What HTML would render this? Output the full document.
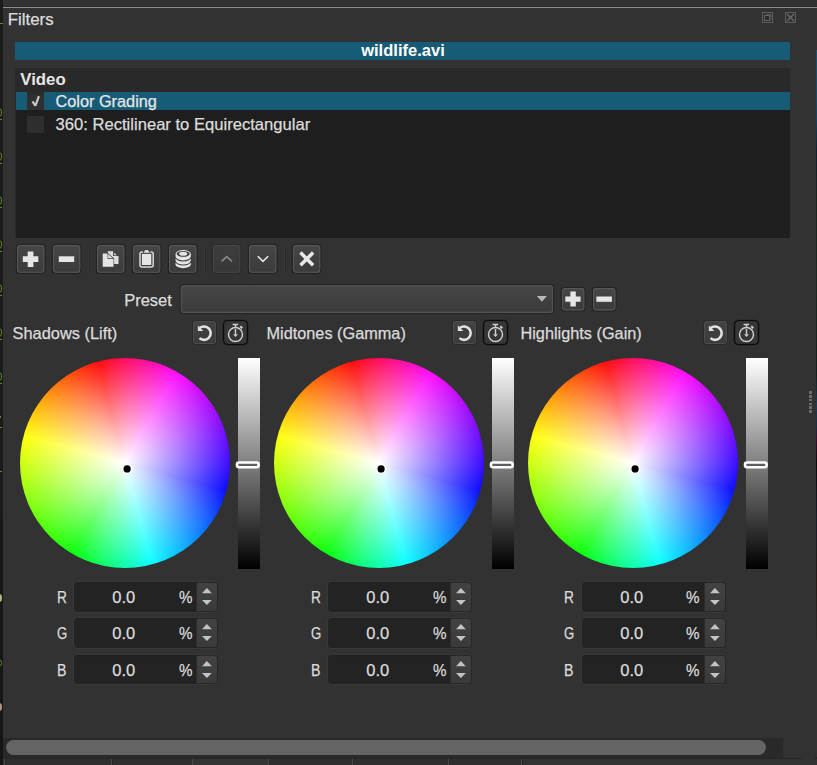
<!DOCTYPE html>
<html>
<head>
<meta charset="utf-8">
<title>Filters</title>
<style>
html,body{margin:0;padding:0;}
body{width:817px;height:765px;overflow:hidden;background:#323232;position:relative;
  font-family:"Liberation Sans",sans-serif;font-size:16.5px;color:#dcdcdc;}
.a{position:absolute;}
.t{position:absolute;white-space:pre;line-height:20px;height:20px;-webkit-text-stroke:0.25px currentColor;}
.btn{position:absolute;}
.btn svg{position:absolute;left:0;top:0;overflow:visible;}
.sep{position:absolute;width:1px;background:#282828;box-shadow:-1px 0 0 #393939;}
.sbtn{position:absolute;box-sizing:border-box;border:1px solid #282828;border-radius:3.5px;
  background:linear-gradient(#434343,#3a3a3a);box-shadow:inset 0 0 0 1px #4d4d4d;}
.kbtn{position:absolute;box-sizing:border-box;border:1px solid #0b0b0b;border-radius:4.5px;background:#363636;box-shadow:0 0 0 .35px rgba(8,8,8,.55),inset 0 0 0 .35px rgba(8,8,8,.5);}
.wheel{position:absolute;width:210px;height:210px;border-radius:50%;
  background:radial-gradient(circle closest-side,#fff 0,rgba(255,255,255,0) 105%),
  conic-gradient(from -15deg,#f00 0deg,#f0f 45deg,#00f 120deg,#0ff 180deg,#0f0 225deg,#ff0 300deg,#f00 360deg);}
.dot{position:absolute;width:7px;height:7px;border-radius:50%;background:#000;box-shadow:0 0 0 1.6px #fff;}
.vs{position:absolute;width:22px;height:211px;background:linear-gradient(#fff,#000);}
.vh{position:absolute;width:24px;height:8px;box-sizing:border-box;border:2.6px solid #fff;border-radius:3.5px;background:rgba(0,0,0,.28);}
.spin{position:absolute;width:145.4px;height:31.5px;box-sizing:border-box;border:1px solid #383838;border-radius:4px;background:linear-gradient(#202020 0,#232323 2px);}
.spin .sb{position:absolute;right:-0.6px;top:0;bottom:0;width:21.6px;box-sizing:border-box;border:1px solid #272727;border-left-color:#2b2b2b;border-radius:0 3.5px 3.5px 0;background:linear-gradient(#424242,#3a3a3a);}
.spin svg{position:absolute;right:0;top:0;}
</style>
</head>
<body>
<svg width="0" height="0" style="position:absolute"><defs>
<linearGradient id="bg1" x1="0" y1="0" x2="0" y2="1"><stop offset="0" stop-color="#474747"/><stop offset="1" stop-color="#3a3a3a"/></linearGradient>
<linearGradient id="bg2" x1="0" y1="0" x2="0" y2="1"><stop offset="0" stop-color="#3d3d3d"/><stop offset="1" stop-color="#383838"/></linearGradient>
</defs></svg>
<!-- left strip of neighbouring panel -->
<div class="a" style="left:0;top:0;width:3px;height:765px;background:linear-gradient(#1b1b1b 0,#1b1b1b 519px,#161616 519px)"></div>
<!-- top lines -->
<div class="a" style="left:3px;top:6px;width:814px;height:1px;background:#282828"></div>
<div class="a" style="left:3px;top:7px;width:814px;height:1px;background:#8e8e8e"></div>

<div class="t" style="left:7.7px;top:10px;font-size:16.9px">Filters</div>

<!-- title bar buttons -->
<svg class="a" style="left:760px;top:10px" width="40" height="16" viewBox="0 0 40 16">
  <rect x="2.5" y="2.5" width="10" height="10" fill="none" stroke="#5d5d5a" stroke-width="1"/>
  <path d="M6 4.6h4.9v4.9" fill="none" stroke="#5d5d5a" stroke-width="1"/>
  <rect x="4.6" y="5.5" width="5" height="5" fill="#2b2b2b" stroke="#646461" stroke-width="1"/>
  <rect x="25.5" y="2.5" width="10" height="10" fill="none" stroke="#5d5d5a" stroke-width="1"/>
  <path d="M27 4l7 7M34 4l-7 7" fill="none" stroke="#6c6c68" stroke-width="1.3"/>
</svg>

<!-- clip name bar -->
<div class="a" style="left:15px;top:42px;width:775px;height:18px;background:#175c76"></div>
<div class="t" style="left:15px;top:39.6px;width:776px;text-align:center;font-weight:700;color:#fff;font-size:16.5px;letter-spacing:0.02px;-webkit-text-stroke:0">wildlife.avi</div>

<!-- filter list -->
<div class="a" style="left:15px;top:68px;width:775px;height:170px;background:#1e1e1e"></div>
<div class="a" style="left:15px;top:68px;width:775px;height:24px;background:#292929"></div>
<div class="a" style="left:15px;top:68px;width:1px;height:170px;background:#2a2a2a"></div>
<div class="t" style="left:20.3px;top:70px;font-weight:700;color:#e6e6e6;font-size:16.8px;-webkit-text-stroke:0">Video</div>
<div class="a" style="left:16px;top:92px;width:774px;height:18px;background:#175c76"></div>
<div class="a" style="left:27px;top:92px;width:17px;height:18px;background:linear-gradient(#2b2b2b 0,#2b2b2b 3px,#303030 3px)"></div>
<svg class="a" style="left:27px;top:92px" width="17" height="18" viewBox="0 0 17 18"><path d="M5.4 9.4 L8.4 13.7 L11.9 4.2" fill="none" stroke="#c8c8c8" stroke-width="2.2" stroke-linejoin="bevel"/></svg>
<div class="t" style="left:55.5px;top:90.6px;color:#e6e6e6;font-size:16.3px">Color Grading</div>
<div class="a" style="left:27px;top:116px;width:17px;height:17px;background:#2e2e2e"></div>
<div class="t" style="left:55.6px;top:114.5px;font-size:16.6px">360: Rectilinear to Equirectangular</div>

<!-- toolbar -->
<div class="btn" style="left:16px;top:244px;width:29px;height:30px"><svg width="30" height="31"><rect x="0.45" y="0.5" width="28.40" height="28.80" rx="3.4" fill="url(#bg1)" stroke="#222" stroke-width="1.15"/><rect x="1.5" y="1.55" width="26.30" height="26.70" rx="2.6" fill="none" stroke="#585858" stroke-width="1.05"/><path d="M11.7 7.4h5.7v4.9h4.9v5.7h-4.9v4.9h-5.7v-4.9h-4.9v-5.7h4.9z" fill="#e6e6e6"/></svg></div>
<div class="btn" style="left:52px;top:244px;width:29px;height:30px"><svg width="30" height="31"><rect x="0.45" y="0.5" width="28.40" height="28.80" rx="3.4" fill="url(#bg1)" stroke="#222" stroke-width="1.15"/><rect x="1.5" y="1.55" width="26.30" height="26.70" rx="2.6" fill="none" stroke="#585858" stroke-width="1.05"/><rect x="6.8" y="12.3" width="15.4" height="5.7" fill="#e6e6e6"/></svg></div>
<div class="sep" style="left:89px;top:246.5px;height:25px"></div>
<div class="btn" style="left:96px;top:244px;width:29px;height:30px"><svg width="30" height="31"><rect x="0.45" y="0.5" width="28.40" height="28.80" rx="3.4" fill="url(#bg1)" stroke="#222" stroke-width="1.15"/><rect x="1.5" y="1.55" width="26.30" height="26.70" rx="2.6" fill="none" stroke="#585858" stroke-width="1.05"/>
  <path d="M11.8 7.3h5.3v4.7h5.4v8h-10.7z" fill="#dcdcdc"/>
  <path d="M18.1 8.7l2.9 2.5h-2.9z" fill="#d6d6d6"/>
  <path d="M6.7 9.6h4.9v5.1h5.9v8h-10.8z" fill="#e4e4e4" stroke="#414141" stroke-width="1.2" paint-order="stroke"/>
  <path d="M11.6 9.2l6.3 5.5" stroke="#414141" stroke-width="0.9" fill="none"/>
  <path d="M12.6 11.2l3.1 2.7h-3.1z" fill="#dedede"/>
</svg></div>
<div class="btn" style="left:132px;top:244px;width:29px;height:30px"><svg width="30" height="31"><rect x="0.45" y="0.5" width="28.40" height="28.80" rx="3.4" fill="url(#bg1)" stroke="#222" stroke-width="1.15"/><rect x="1.5" y="1.55" width="26.30" height="26.70" rx="2.6" fill="none" stroke="#585858" stroke-width="1.05"/>
  <path d="M10.9 8h-0.9a2 2 0 0 0-2 2v11.1a2 2 0 0 0 2 2h9.2a2 2 0 0 0 2-2v-11.1a2 2 0 0 0-2-2h-0.9" fill="none" stroke="#d8d8d8" stroke-width="1.5"/>
  <rect x="9.9" y="9.9" width="9.4" height="11.1" fill="#e4e4e4"/>
  <path d="M11.5 8.8l1.9-2.9h2.4l1.9 2.9z" fill="#e0e0e0"/>
</svg></div>
<div class="btn" style="left:168px;top:244px;width:29px;height:30px"><svg width="30" height="31"><rect x="0.45" y="0.5" width="28.40" height="28.80" rx="3.4" fill="url(#bg1)" stroke="#222" stroke-width="1.15"/><rect x="1.5" y="1.55" width="26.30" height="26.70" rx="2.6" fill="none" stroke="#585858" stroke-width="1.05"/>
  <ellipse cx="15.2" cy="20.4" rx="7.6" ry="3.8" fill="#e4e4e4"/>
  <rect x="7.6" y="10" width="15.2" height="10.4" fill="#e4e4e4"/>
  <ellipse cx="15.2" cy="10" rx="7.6" ry="3.9" fill="#e4e4e4"/>
  <path d="M7.4 13a7.8 3.9 0 0 0 15.6 0" fill="none" stroke="#3e3e3e" stroke-width="1.05"/>
  <path d="M7.4 17.1a7.8 3.9 0 0 0 15.6 0" fill="none" stroke="#3e3e3e" stroke-width="1.05"/>
  <ellipse cx="15.2" cy="9.85" rx="6.5" ry="2.95" fill="#3e3e3e"/>
  <ellipse cx="15.2" cy="9.8" rx="4.1" ry="2" fill="#e4e4e4"/>
</svg></div>
<div class="sep" style="left:205px;top:246.5px;height:25px"></div>
<div class="btn" style="left:212px;top:244px;width:29px;height:30px"><svg width="30" height="31"><rect x="0.45" y="0.5" width="28.40" height="28.80" rx="3.4" fill="url(#bg2)" stroke="#2a2a2a" stroke-width="1.15"/><rect x="1.5" y="1.55" width="26.30" height="26.70" rx="2.6" fill="none" stroke="#474747" stroke-width="1.05"/><path d="M9.6 17.4l5.1-4.7 5.3 4.7" fill="none" stroke="#8a8a8a" stroke-width="1.6"/></svg></div>
<div class="btn" style="left:248px;top:244px;width:29px;height:30px"><svg width="30" height="31"><rect x="0.45" y="0.5" width="28.40" height="28.80" rx="3.4" fill="url(#bg1)" stroke="#222" stroke-width="1.15"/><rect x="1.5" y="1.55" width="26.30" height="26.70" rx="2.6" fill="none" stroke="#585858" stroke-width="1.05"/><path d="M9.8 12.2l5.1 5.2 5.3-5.2" fill="none" stroke="#e8e8e8" stroke-width="1.6"/></svg></div>
<div class="sep" style="left:285px;top:246.5px;height:25px"></div>
<div class="btn" style="left:292px;top:244px;width:29px;height:30px"><svg width="30" height="31"><rect x="0.45" y="0.5" width="28.40" height="28.80" rx="3.4" fill="url(#bg1)" stroke="#222" stroke-width="1.15"/><rect x="1.5" y="1.55" width="26.30" height="26.70" rx="2.6" fill="none" stroke="#585858" stroke-width="1.05"/><path d="M8.5 8.6l12.6 12.7M21.1 8.6l-12.6 12.7" fill="none" stroke="#e8e8e8" stroke-width="3.5"/></svg></div>

<!-- preset row -->
<div class="t" style="left:124.2px;top:290px">Preset</div>
<svg class="a" style="left:179px;top:283px" width="377" height="33"><rect x="1.2" y="1.65" width="373.4" height="28.8" rx="3.6" fill="url(#bg1)" stroke="#232323" stroke-width="1.15"/><rect x="2.25" y="2.65" width="371.25" height="26.7" rx="2.7" fill="none" stroke="#555" stroke-width="1.05"/></svg>
<svg class="a" style="left:536px;top:295px" width="12" height="8"><path d="M0.9 1.1h10l-5 5.7z" fill="#b8b8b8"/></svg>
<div class="btn" style="left:561px;top:287px;width:24px;height:24px"><svg width="25" height="25"><rect x="0.45" y="0.5" width="23.50" height="23.40" rx="3.4" fill="url(#bg1)" stroke="#222" stroke-width="1.15"/><rect x="1.5" y="1.55" width="21.40" height="21.30" rx="2.6" fill="none" stroke="#585858" stroke-width="1.05"/><path d="M9.4 4.5h5.4v5h4.8v5.3h-4.8v4.8h-5.4v-4.8h-5.1v-5.3h5.1z" fill="#e6e6e6"/></svg></div>
<div class="btn" style="left:592.3px;top:287px;width:24px;height:24px"><svg width="25" height="25"><rect x="0.45" y="0.5" width="23.50" height="23.40" rx="3.4" fill="url(#bg1)" stroke="#222" stroke-width="1.15"/><rect x="1.5" y="1.55" width="21.40" height="21.30" rx="2.6" fill="none" stroke="#585858" stroke-width="1.05"/><rect x="4.4" y="9.5" width="15.5" height="5.3" fill="#e6e6e6"/></svg></div>

<!-- section labels -->
<div class="t" style="left:12.5px;top:323px;font-size:16.4px">Shadows (Lift)</div>
<div class="t" style="left:266.5px;top:323px;font-size:16.3px">Midtones (Gamma)</div>
<div class="t" style="left:520.5px;top:323px;font-size:16.3px">Highlights (Gain)</div>

<!-- WHEELS -->
<div class="sbtn" style="left:192px;top:320px;width:25px;height:25px"><svg style="position:absolute;left:-1px;top:-1px" width="25" height="25" viewBox="0 0 25 25"><path d="M7.7 8 A6.7 6.7 0 1 1 7.5 18.1" fill="none" stroke="#e2e2e2" stroke-width="2.6"/><path d="M5.9 5.5V10.9H11.3z" fill="#e2e2e2"/></svg></div>
<div class="kbtn" style="left:223px;top:320px;width:25px;height:25px"><svg width="25" height="25" viewBox="0 0 25 25" style="position:absolute;left:-1px;top:-1px"><circle cx="12.5" cy="14.5" r="7" fill="none" stroke="#d0d0d0" stroke-width="1.45"/><path d="M9.6 4.55h5.6M12.5 4.5v3.2" fill="none" stroke="#d0d0d0" stroke-width="1.45"/><path d="M17.3 6.3l2 1.9" fill="none" stroke="#d0d0d0" stroke-width="1.9"/><path d="M12.5 9v5.5" stroke="#d0d0d0" stroke-width="1.45" fill="none"/><path d="M10.1 14.2h4.8l-2.4 2.9z" fill="#d0d0d0"/></svg></div>
<div class="wheel" style="left:20px;top:358px"></div>
<svg class="a" style="left:117px;top:459px" width="20" height="20"><circle cx="10.1" cy="9.9" r="5.2" fill="#fff"/><circle cx="10.1" cy="9.9" r="3.6" fill="#000"/></svg>
<div class="vs" style="left:238px;top:358px"></div>
<svg class="a" style="left:235px;top:460px" width="26" height="10"><rect x="2" y="2.5" width="21.6" height="4.8" rx="2" fill="rgba(0,0,0,.25)" stroke="#fff" stroke-width="2.6"/></svg>
<div class="sbtn" style="left:452px;top:320px;width:25px;height:25px"><svg style="position:absolute;left:-1px;top:-1px" width="25" height="25" viewBox="0 0 25 25"><path d="M7.7 8 A6.7 6.7 0 1 1 7.5 18.1" fill="none" stroke="#e2e2e2" stroke-width="2.6"/><path d="M5.9 5.5V10.9H11.3z" fill="#e2e2e2"/></svg></div>
<div class="kbtn" style="left:483px;top:320px;width:25px;height:25px"><svg width="25" height="25" viewBox="0 0 25 25" style="position:absolute;left:-1px;top:-1px"><circle cx="12.5" cy="14.5" r="7" fill="none" stroke="#d0d0d0" stroke-width="1.45"/><path d="M9.6 4.55h5.6M12.5 4.5v3.2" fill="none" stroke="#d0d0d0" stroke-width="1.45"/><path d="M17.3 6.3l2 1.9" fill="none" stroke="#d0d0d0" stroke-width="1.9"/><path d="M12.5 9v5.5" stroke="#d0d0d0" stroke-width="1.45" fill="none"/><path d="M10.1 14.2h4.8l-2.4 2.9z" fill="#d0d0d0"/></svg></div>
<div class="wheel" style="left:274px;top:358px"></div>
<svg class="a" style="left:371px;top:459px" width="20" height="20"><circle cx="10.1" cy="9.9" r="5.2" fill="#fff"/><circle cx="10.1" cy="9.9" r="3.6" fill="#000"/></svg>
<div class="vs" style="left:492px;top:358px"></div>
<svg class="a" style="left:489px;top:460px" width="26" height="10"><rect x="2" y="2.5" width="21.6" height="4.8" rx="2" fill="rgba(0,0,0,.25)" stroke="#fff" stroke-width="2.6"/></svg>
<div class="sbtn" style="left:703px;top:320px;width:25px;height:25px"><svg style="position:absolute;left:-1px;top:-1px" width="25" height="25" viewBox="0 0 25 25"><path d="M7.7 8 A6.7 6.7 0 1 1 7.5 18.1" fill="none" stroke="#e2e2e2" stroke-width="2.6"/><path d="M5.9 5.5V10.9H11.3z" fill="#e2e2e2"/></svg></div>
<div class="kbtn" style="left:734px;top:320px;width:25px;height:25px"><svg width="25" height="25" viewBox="0 0 25 25" style="position:absolute;left:-1px;top:-1px"><circle cx="12.5" cy="14.5" r="7" fill="none" stroke="#d0d0d0" stroke-width="1.45"/><path d="M9.6 4.55h5.6M12.5 4.5v3.2" fill="none" stroke="#d0d0d0" stroke-width="1.45"/><path d="M17.3 6.3l2 1.9" fill="none" stroke="#d0d0d0" stroke-width="1.9"/><path d="M12.5 9v5.5" stroke="#d0d0d0" stroke-width="1.45" fill="none"/><path d="M10.1 14.2h4.8l-2.4 2.9z" fill="#d0d0d0"/></svg></div>
<div class="wheel" style="left:528px;top:358px"></div>
<svg class="a" style="left:625px;top:459px" width="20" height="20"><circle cx="10.1" cy="9.9" r="5.2" fill="#fff"/><circle cx="10.1" cy="9.9" r="3.6" fill="#000"/></svg>
<div class="vs" style="left:746px;top:358px"></div>
<svg class="a" style="left:743px;top:460px" width="26" height="10"><rect x="2" y="2.5" width="21.6" height="4.8" rx="2" fill="rgba(0,0,0,.25)" stroke="#fff" stroke-width="2.6"/></svg>
<!-- SPINS -->
<div class="t" style="left:56.9px;top:587px;font-size:16.5px;transform:scaleX(0.83);transform-origin:0 0">R</div>
<div class="spin" style="left:73px;top:581px;height:31.5px"><div class="sb"></div><svg width="21" height="30" viewBox="0 0 21 30"><path d="M6 11.2h9.8l-4.9-5.2z" fill="#c4c4c4"/><path d="M6 17.9h9.8l-4.9 5.2z" fill="#c4c4c4"/></svg></div>
<div class="t" style="left:112.3px;top:587px;font-size:16.5px">0.0</div>
<div class="t" style="left:178.6px;top:587px;font-size:16.5px;transform:scaleX(.92);transform-origin:0 0">%</div>
<div class="t" style="left:56.6px;top:623px;font-size:16.5px;transform:scaleX(0.8);transform-origin:0 0">G</div>
<div class="spin" style="left:73px;top:617px;height:31.5px"><div class="sb"></div><svg width="21" height="30" viewBox="0 0 21 30"><path d="M6 11.2h9.8l-4.9-5.2z" fill="#c4c4c4"/><path d="M6 17.9h9.8l-4.9 5.2z" fill="#c4c4c4"/></svg></div>
<div class="t" style="left:112.3px;top:623px;font-size:16.5px">0.0</div>
<div class="t" style="left:178.6px;top:623px;font-size:16.5px;transform:scaleX(.92);transform-origin:0 0">%</div>
<div class="t" style="left:57.0px;top:660px;font-size:16.5px;transform:scaleX(0.86);transform-origin:0 0">B</div>
<div class="spin" style="left:73px;top:654px;height:31px"><div class="sb"></div><svg width="21" height="30" viewBox="0 0 21 30"><path d="M6 11.2h9.8l-4.9-5.2z" fill="#c4c4c4"/><path d="M6 17.9h9.8l-4.9 5.2z" fill="#c4c4c4"/></svg></div>
<div class="t" style="left:112.3px;top:660px;font-size:16.5px">0.0</div>
<div class="t" style="left:178.6px;top:660px;font-size:16.5px;transform:scaleX(.92);transform-origin:0 0">%</div>
<div class="t" style="left:310.9px;top:587px;font-size:16.5px;transform:scaleX(0.83);transform-origin:0 0">R</div>
<div class="spin" style="left:327px;top:581px;height:31.5px"><div class="sb"></div><svg width="21" height="30" viewBox="0 0 21 30"><path d="M6 11.2h9.8l-4.9-5.2z" fill="#c4c4c4"/><path d="M6 17.9h9.8l-4.9 5.2z" fill="#c4c4c4"/></svg></div>
<div class="t" style="left:366.3px;top:587px;font-size:16.5px">0.0</div>
<div class="t" style="left:432.6px;top:587px;font-size:16.5px;transform:scaleX(.92);transform-origin:0 0">%</div>
<div class="t" style="left:310.6px;top:623px;font-size:16.5px;transform:scaleX(0.8);transform-origin:0 0">G</div>
<div class="spin" style="left:327px;top:617px;height:31.5px"><div class="sb"></div><svg width="21" height="30" viewBox="0 0 21 30"><path d="M6 11.2h9.8l-4.9-5.2z" fill="#c4c4c4"/><path d="M6 17.9h9.8l-4.9 5.2z" fill="#c4c4c4"/></svg></div>
<div class="t" style="left:366.3px;top:623px;font-size:16.5px">0.0</div>
<div class="t" style="left:432.6px;top:623px;font-size:16.5px;transform:scaleX(.92);transform-origin:0 0">%</div>
<div class="t" style="left:311.0px;top:660px;font-size:16.5px;transform:scaleX(0.86);transform-origin:0 0">B</div>
<div class="spin" style="left:327px;top:654px;height:31px"><div class="sb"></div><svg width="21" height="30" viewBox="0 0 21 30"><path d="M6 11.2h9.8l-4.9-5.2z" fill="#c4c4c4"/><path d="M6 17.9h9.8l-4.9 5.2z" fill="#c4c4c4"/></svg></div>
<div class="t" style="left:366.3px;top:660px;font-size:16.5px">0.0</div>
<div class="t" style="left:432.6px;top:660px;font-size:16.5px;transform:scaleX(.92);transform-origin:0 0">%</div>
<div class="t" style="left:564.3px;top:587px;font-size:16.5px;transform:scaleX(0.83);transform-origin:0 0">R</div>
<div class="spin" style="left:581px;top:581px;height:31.5px"><div class="sb"></div><svg width="21" height="30" viewBox="0 0 21 30"><path d="M6 11.2h9.8l-4.9-5.2z" fill="#c4c4c4"/><path d="M6 17.9h9.8l-4.9 5.2z" fill="#c4c4c4"/></svg></div>
<div class="t" style="left:620.3px;top:587px;font-size:16.5px">0.0</div>
<div class="t" style="left:686.0px;top:587px;font-size:16.5px;transform:scaleX(.92);transform-origin:0 0">%</div>
<div class="t" style="left:564.0px;top:623px;font-size:16.5px;transform:scaleX(0.8);transform-origin:0 0">G</div>
<div class="spin" style="left:581px;top:617px;height:31.5px"><div class="sb"></div><svg width="21" height="30" viewBox="0 0 21 30"><path d="M6 11.2h9.8l-4.9-5.2z" fill="#c4c4c4"/><path d="M6 17.9h9.8l-4.9 5.2z" fill="#c4c4c4"/></svg></div>
<div class="t" style="left:620.3px;top:623px;font-size:16.5px">0.0</div>
<div class="t" style="left:686.0px;top:623px;font-size:16.5px;transform:scaleX(.92);transform-origin:0 0">%</div>
<div class="t" style="left:564.4px;top:660px;font-size:16.5px;transform:scaleX(0.86);transform-origin:0 0">B</div>
<div class="spin" style="left:581px;top:654px;height:31px"><div class="sb"></div><svg width="21" height="30" viewBox="0 0 21 30"><path d="M6 11.2h9.8l-4.9-5.2z" fill="#c4c4c4"/><path d="M6 17.9h9.8l-4.9 5.2z" fill="#c4c4c4"/></svg></div>
<div class="t" style="left:620.3px;top:660px;font-size:16.5px">0.0</div>
<div class="t" style="left:686.0px;top:660px;font-size:16.5px;transform:scaleX(.92);transform-origin:0 0">%</div>

<!-- bottom scrollbar -->
<div class="a" style="left:3px;top:738px;width:780px;height:20px;background:#292929"></div>
<div class="a" style="left:6px;top:740px;width:760px;height:15px;border-radius:7.5px;background:#646464"></div>
<div class="a" style="left:3px;top:758px;width:799px;height:1px;background:#272727"></div>
<!-- tab outlines of dock tabs below -->
<div class="a" style="left:3px;top:759px;width:520px;height:6px;background:#2f2f2f"></div>
<div class="a" style="left:4px;top:759px;width:1px;height:6px;background:#4a4a4a"></div><div class="a" style="left:5px;top:759px;width:1px;height:6px;background:#262626"></div>
<div class="a" style="left:111px;top:759px;width:1px;height:6px;background:#4a4a4a"></div><div class="a" style="left:112px;top:759px;width:1px;height:6px;background:#262626"></div>
<div class="a" style="left:192px;top:759px;width:1px;height:6px;background:#4a4a4a"></div><div class="a" style="left:193px;top:759px;width:1px;height:6px;background:#262626"></div>
<div class="a" style="left:268px;top:759px;width:1px;height:6px;background:#4a4a4a"></div><div class="a" style="left:269px;top:759px;width:1px;height:6px;background:#262626"></div>
<div class="a" style="left:352px;top:759px;width:1px;height:6px;background:#4a4a4a"></div><div class="a" style="left:353px;top:759px;width:1px;height:6px;background:#262626"></div>
<div class="a" style="left:448px;top:759px;width:1px;height:6px;background:#4a4a4a"></div><div class="a" style="left:449px;top:759px;width:1px;height:6px;background:#262626"></div>
<div class="a" style="left:521px;top:759px;width:1px;height:6px;background:#4a4a4a"></div><div class="a" style="left:522px;top:759px;width:1px;height:6px;background:#262626"></div>
<div class="a" style="left:193px;top:759px;width:75px;height:6px;background:#343434"></div>
<div class="a" style="left:815px;top:757px;width:2px;height:2px;background:#262626"></div>
<!-- neighbour panel bits -->
<div class="a" style="left:0px;top:23px;width:3px;height:1px;background:#5f8f1e"></div>
<div class="a" style="left:-5px;top:108px;width:7px;height:9px;box-sizing:border-box;border:1.5px solid #5f8f1e;border-radius:4px"></div>
<div class="a" style="left:0px;top:119px;width:2px;height:1px;background:#5f8f1e"></div>
<div class="a" style="left:-5px;top:152px;width:7px;height:9px;box-sizing:border-box;border:1.5px solid #5f8f1e;border-radius:4px"></div>
<div class="a" style="left:0px;top:163px;width:2px;height:1px;background:#5f8f1e"></div>
<div class="a" style="left:-5px;top:196px;width:7px;height:9px;box-sizing:border-box;border:1.5px solid #5f8f1e;border-radius:4px"></div>
<div class="a" style="left:0px;top:207px;width:2px;height:1px;background:#5f8f1e"></div>
<div class="a" style="left:-5px;top:240px;width:7px;height:9px;box-sizing:border-box;border:1.5px solid #5f8f1e;border-radius:4px"></div>
<div class="a" style="left:0px;top:251px;width:2px;height:1px;background:#5f8f1e"></div>
<div class="a" style="left:-5px;top:284px;width:7px;height:9px;box-sizing:border-box;border:1.5px solid #5f8f1e;border-radius:4px"></div>
<div class="a" style="left:0px;top:295px;width:2px;height:1px;background:#5f8f1e"></div>
<div class="a" style="left:-5px;top:328px;width:7px;height:9px;box-sizing:border-box;border:1.5px solid #5f8f1e;border-radius:4px"></div>
<div class="a" style="left:0px;top:339px;width:2px;height:1px;background:#5f8f1e"></div>
<div class="a" style="left:-5px;top:372px;width:7px;height:9px;box-sizing:border-box;border:1.5px solid #5f8f1e;border-radius:4px"></div>
<div class="a" style="left:0px;top:383px;width:2px;height:1px;background:#5f8f1e"></div>
<div class="a" style="left:0px;top:416px;width:1px;height:2px;background:#5f8f1e"></div>
<div class="a" style="left:0px;top:427px;width:2px;height:1px;background:#5f8f1e"></div>
<div class="a" style="left:0px;top:471px;width:2px;height:1px;background:#5f8f1e"></div>
<div class="a" style="left:-5px;top:659px;width:7px;height:8px;box-sizing:border-box;border:1.5px solid #5f8f1e;border-radius:4px"></div>
<div class="a" style="left:-4px;top:594px;width:6px;height:8px;border-radius:4px;background:#b9b27c"></div>
<div class="a" style="left:-4px;top:703px;width:6px;height:8px;border-radius:4px;background:#b9927c"></div>
<div class="a" style="left:809px;top:391px;width:3px;height:3px;background:#6c6c6c"></div>
<div class="a" style="left:809px;top:395px;width:3px;height:3px;background:#6c6c6c"></div>
<div class="a" style="left:809px;top:399px;width:3px;height:2px;background:#6c6c6c"></div>
<div class="a" style="left:809px;top:403px;width:3px;height:2px;background:#6c6c6c"></div>
<div class="a" style="left:809px;top:406px;width:3px;height:3px;background:#6c6c6c"></div>
<div class="a" style="left:809px;top:410px;width:3px;height:3px;background:#6c6c6c"></div>
<div class="a" style="left:816px;top:50px;width:1px;height:590px;background:linear-gradient(#175273 0,#124463 12%,#0c2233 17%,#16241c 25%,#1a2a22 40%,#10201c 55%,#1d3b55 60%,#1a2f45 64%,#3a0f35 66%,#08080a 70%,#15202c 80%,#241a10 90%,#2a2a2a 100%)"></div>
</body>
</html>
